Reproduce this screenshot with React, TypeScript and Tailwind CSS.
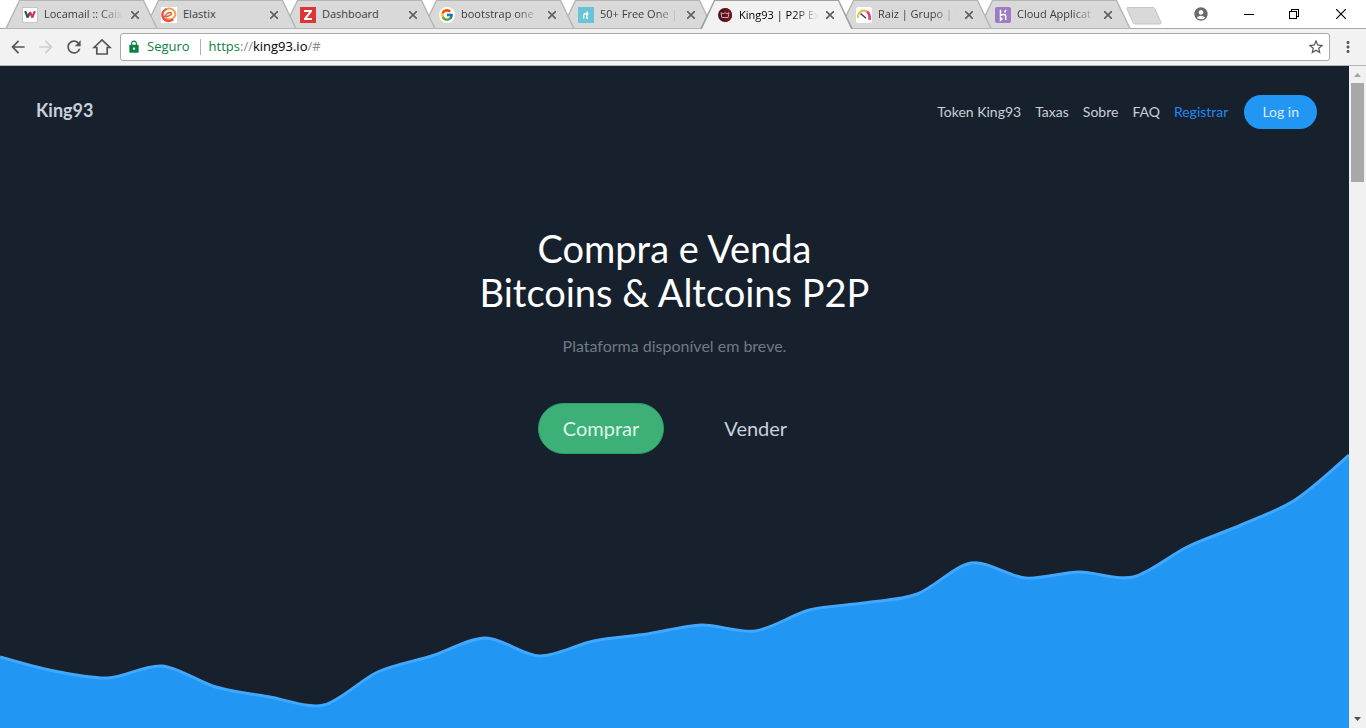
import React from "react";
import { FcGoogle } from "react-icons/fc";
import { MdAccountCircle, MdArrowBack, MdArrowForward, MdLock, MdMoreVert, MdRefresh, MdStarBorder } from "react-icons/md";

const chromeFont = "font-['Open_Sans','Noto_Sans',sans-serif]";
const siteFont = "font-[Lato,'Noto_Sans',sans-serif]";

/* ---------- favicons ---------- */

const LocamailIcon = () => (
  <svg viewBox="0 0 16 16" className="size-4" fill="none" strokeWidth="2.200">
    <rect x=".5" y=".5" width="15" height="15" fill="#fff" stroke="#c3c6ca" strokeWidth="1" />
    <path d="M2.500 5h1.200l1.800 5.500L8 5.500" stroke="#3d4a66" strokeLinejoin="bevel" />
    <path d="M8 5l2.400 5.500L12.300 5h1.200" stroke="#d8344f" strokeLinejoin="bevel" />
  </svg>
);

const ElastixIcon = () => (
  <svg viewBox="0 0 16 16" className="size-4" fill="none">
    <rect width="16" height="16" fill="#fff" />
    <path d="M5 2.300C8 .6 12 1.500 13.700 4.500c1.600 3 .2 6.400-3 7.500-2.400.8-4.800.2-6.200-1.200" stroke="#f0a24a" strokeWidth="2" />
    <path d="M5.500 2C2 3.600.7 7 2 10.200c1.600 3.900 6.500 5 10.300 2.200" stroke="#e8503f" strokeWidth="2.400" />
    <path d="M2.500 9.500c3 .3 7.600-.8 8.100-2.600.3-1.300-2.200-1.700-3.900-.8-1.300.7-2 1.600-2.200 2.800" stroke="#e8603f" strokeWidth="1.600" />
  </svg>
);

const ZabbixIcon = () => (
  <svg viewBox="0 0 16 16" className="size-4" fill="none" stroke="#fff" strokeWidth="2">
    <rect width="16" height="16" fill="#dc3535" stroke="none" />
    <path d="M4 4h8M4 12h8" />
    <path d="M11 4.200l-6 7.600" />
  </svg>
);

const GoogleIcon = () => (
  <span className="flex size-4 items-center justify-center rounded-full bg-white">
    <FcGoogle className="size-3.5" />
  </span>
);

const TemplateIcon = () => (
  <svg viewBox="0 0 16 16" className="size-4" fill="none" stroke="#fff" strokeWidth="1.400">
    <rect width="16" height="16" fill="#68c4d6" stroke="none" />
    <path d="M5.700 11.500V8.500c0-1.200.6-1.800 1.800-1.700M9.200 4.500l-.5 5.800c0 1 .5 1.300 1.400 1M7.400 6.800h3" />
  </svg>
);

const KingIcon = () => (
  <svg viewBox="0 0 16 16" className="size-4">
    <circle cx="8" cy="8" r="7" fill="#4e121f" />
    <path d="M8 1a7 7 0 0 1 0 14z" fill="#6b1520" />
    <path d="M4 5.500l2 1.500 2-1.500L10 7l2-1.500-.8 5H4.800z" fill="none" stroke="#d8a5a8" strokeWidth="1" />
  </svg>
);

const RaizIcon = () => (
  <svg viewBox="0 0 16 16" className="size-4" fill="none" strokeWidth="2">
    <rect width="16" height="16" rx="2" fill="#fff" />
    <path d="M2.300 11C1.600 8 3 5.500 5 4.300" stroke="#c9d436" />
    <path d="M4.600 4.500c2.200-1.300 5-1.200 6.900.4" stroke="#f6a83b" />
    <path d="M11 4.500c2 1.500 3 4 2.600 8.300" stroke="#ea3f80" strokeWidth="2.800" />
    <path d="M4.500 6.500l5.500 4.800" stroke="#33406b" strokeWidth="1.500" />
  </svg>
);

const HerokuIcon = () => (
  <svg viewBox="0 0 16 16" className="size-4" fill="none" stroke="#fff" strokeWidth="1.500">
    <rect width="16" height="16" rx="2" fill="#9e7cc1" stroke="none" />
    <path d="M5.500 2.800v5.700c2-1 5.200-1.600 5.200.6v4M10.700 2.800c0 1-.4 1.800-1.200 2.600M5.500 10.600v2.600l1.500-1.300z" />
  </svg>
);

/* ---------- window chrome ---------- */

type Tab = { title: string; icon: React.ReactNode; layer: string; active?: boolean; long?: boolean };

const tabs: Tab[] = [
  { title: "Locamail :: Caix", icon: <LocamailIcon />, layer: "z-[8]", long: true },
  { title: "Elastix", icon: <ElastixIcon />, layer: "z-[7]" },
  { title: "Dashboard", icon: <ZabbixIcon />, layer: "z-[6]" },
  { title: "bootstrap one", icon: <GoogleIcon />, layer: "z-[5]", long: true },
  { title: "50+ Free One |", icon: <TemplateIcon />, layer: "z-[4]", long: true },
  { title: "King93 | P2P Ex", icon: <KingIcon />, layer: "z-[9]", active: true, long: true },
  { title: "Raiz | Grupo | P", icon: <RaizIcon />, layer: "z-[3]", long: true },
  { title: "Cloud Applicat", icon: <HerokuIcon />, layer: "z-[2]", long: true },
];

const CloseGlyph = () => (
  <svg viewBox="0 0 8 8" className="size-2" stroke="#5f5f5f" strokeWidth="1.600">
    <path d="M0 0l8 8M8 0L0 8" />
  </svg>
);

function BrowserTab({ tab }: { tab: Tab }) {
  return (
    <div
      className={`-mr-3.5 h-[29px] w-[153px] shrink-0 pt-px [clip-path:polygon(14px_0,139px_0,100%_100%,0_100%)] ${tab.layer} ${
        tab.active ? "bg-[#a0a0a0]" : "bg-[#b4b4b4] pb-px"
      }`}
    >
      <div
        className={`flex h-full items-center pr-[19px] pl-[17px] [clip-path:polygon(15px_0,138px_0,calc(100%-2px)_100%,2px_100%)] ${
          tab.active ? "bg-[#f2f2f2]" : "bg-[#d9d9d9]"
        }`}
      >
        {tab.icon}
        <span
          className={`ml-1.5 min-w-0 flex-1 text-[11px] whitespace-nowrap ${
            tab.long ? "[mask-image:linear-gradient(to_right,#000_70%,transparent)]" : ""
          } ${tab.active ? "text-black" : "text-[#3c3c3c]"}`}
        >
          {tab.title}
        </span>
        <button aria-label={`Fechar ${tab.title}`} className="ml-2">
          <CloseGlyph />
        </button>
      </div>
    </div>
  );
}

function TabStrip() {
  return (
    <div className="flex h-[29px] items-start border-b border-[#a9a9a9] bg-white pl-[5px]">
      <div className="isolate -mb-px flex">
        {tabs.map((tab) => (
          <BrowserTab key={tab.title} tab={tab} />
        ))}
      </div>
      <button aria-label="Nova guia" className="mt-[7px] ml-[9px]">
        <svg viewBox="0 0 36 18" className="h-[18px] w-9">
          <path d="M2 .5h25q1.500 0 2 1.500l6 13.500q.5 1.500-1.500 1.500H9q-1.500 0-2-1.500L1 2Q.5.5 2 .5z" fill="#d9d9d9" stroke="#c4c4c4" />
        </svg>
      </button>
      <div className="ml-auto flex h-[27px] items-center">
        <button aria-label="Perfil" className="flex w-[50px] justify-center">
          <MdAccountCircle className="size-4 text-[#6b6b6b]" />
        </button>
        <button aria-label="Minimizar" className="flex w-[46px] justify-center">
          <svg viewBox="0 0 10 10" className="size-2.5" shapeRendering="crispEdges">
            <path d="M0 5.500h10" stroke="#000" />
          </svg>
        </button>
        <button aria-label="Restaurar" className="flex w-11 justify-center">
          <svg viewBox="0 0 10 10" className="size-2.5" fill="none" stroke="#000" shapeRendering="crispEdges">
            <path d="M.5 2.500h7v7h-7zM2.500 2.500v-2h7v7h-2" />
          </svg>
        </button>
        <button aria-label="Fechar" className="flex w-[50px] justify-center">
          <svg viewBox="0 0 10 10" className="size-2.5" stroke="#000" strokeWidth="1.200">
            <path d="M0 0l10 10M10 0L0 10" />
          </svg>
        </button>
      </div>
    </div>
  );
}

function Toolbar() {
  return (
    <div className="flex h-[37px] items-center border-b border-[#b6b4b6] bg-[#f2f2f2] pl-2">
      <div className="flex items-center gap-2 text-[#555]">
        <button aria-label="Voltar">
          <MdArrowBack className="size-5" />
        </button>
        <button aria-label="Avançar" className="text-[#cfcfcf]">
          <MdArrowForward className="size-5" />
        </button>
        <button aria-label="Recarregar">
          <MdRefresh className="size-5" />
        </button>
        <button aria-label="Página inicial">
          <svg viewBox="0 0 20 20" className="size-5" fill="none" stroke="#555" strokeWidth="1.700">
            <path d="M2 10.500L10 3l8 7.500h-2.800V17H4.800v-6.500z" />
          </svg>
        </button>
      </div>
      <div className="ml-2 flex h-7 flex-1 items-center rounded-[3px] border border-[#a9a9a9] bg-white pr-1 pl-1.5 text-[13px]">
        <MdLock className="size-3.5 text-[#0b8043]" />
        <span className="ml-1.5 text-[#0b8043]">Seguro</span>
        <span className="mr-2 ml-2.5 h-4 w-px bg-[#b0b0b0]" />
        <a href="#" className="flex-1 text-[#8a8a8a]">
          <span className="text-[#0b8043]">https</span>://<span className="text-black">king93.io</span>/#
        </a>
        <button aria-label="Favoritar">
          <MdStarBorder className="size-[18px] text-[#555]" />
        </button>
      </div>
      <button aria-label="Menu" className="flex w-9 justify-center">
        <MdMoreVert className="size-[18px] text-[#555]" />
      </button>
    </div>
  );
}

function ScrollBar() {
  return (
    <div className="flex w-[17px] shrink-0 flex-col items-center bg-[#f1f1f1]">
      <svg viewBox="0 0 17 17" className="size-[17px]">
        <path d="M5 11l3.500-4 3.500 4z" fill="#a3a3a3" />
      </svg>
      <div className="h-[99px] w-[13px] bg-[#a8a8a8]" />
      <svg viewBox="0 0 17 17" className="mt-auto size-[17px]">
        <path d="M5 6l3.500 4L12 6z" fill="#505050" />
      </svg>
    </div>
  );
}

/* ---------- price chart ---------- */

const CHART_W = 1349;
const CHART_H = 274;
const TENSION = 0.3;
const values = [203, 217, 224, 212, 233, 243, 251, 218, 202, 184, 202, 187, 180, 171, 177, 156, 149, 140, 109, 124, 118, 123, 93, 71, 46, 1];

/* Smooth line through every point; each handle follows the slope between its neighbours. */
function splinePath(data: number[]) {
  const step = CHART_W / (data.length - 1);
  const last = data.length - 1;
  const handleX = (i: number) => (i === 0 || i === last ? 0 : step * TENSION);
  const handleY = (i: number) => (i === 0 || i === last ? 0 : ((data[i + 1] - data[i - 1]) / 2) * TENSION);
  return data
    .map((y, i) => {
      const x = i * step;
      if (i === 0) return `M${x} ${y}`;
      return `C${x - step + handleX(i - 1)} ${data[i - 1] + handleY(i - 1)} ${x - handleX(i)} ${y - handleY(i)} ${x} ${y}`;
    })
    .join("");
}

function PriceChart() {
  const line = splinePath(values);
  return (
    <svg viewBox={`0 0 ${CHART_W} ${CHART_H}`} preserveAspectRatio="none" className="mt-auto block h-[274px] w-full" aria-hidden="true">
      <path d={`${line}V${CHART_H}H0z`} fill="#2196f3" />
      <path d={line} fill="none" stroke="#41a8ff" strokeWidth="3" />
    </svg>
  );
}

/* ---------- page ---------- */

const links = ["Token King93", "Taxas", "Sobre", "FAQ"];

function Site() {
  return (
    <main className={`flex min-w-0 flex-1 flex-col bg-[#17202d] text-[#c8d0da] ${siteFont}`}>
      <header className="flex items-start justify-between pt-[29px] pr-8 pl-9">
        <a href="#" className="text-lg leading-[30px] font-bold">
          King93
        </a>
        <nav className="flex items-center gap-4 text-sm">
          <div className="flex gap-3.5">
            {links.map((label) => (
              <a key={label} href="#">
                {label}
              </a>
            ))}
            <a href="#" className="text-[#2188f3]">
              Registrar
            </a>
          </div>
          <button className="h-[34px] rounded-full bg-[#2196f3] px-[18px] text-[#dcecfb]">Log in</button>
        </nav>
      </header>
      <section className="flex flex-col items-center pt-[97px] text-center">
        <h1 className="text-[38px] leading-[44px] text-white">
          Compra e Venda
          <br />
          Bitcoins &amp; Altcoins P2P
        </h1>
        <p className="mt-5 text-base leading-6 text-[#707987]">Plataforma disponível em breve.</p>
        <div className="mt-[45px] flex gap-9 text-xl">
          <button className="h-[51px] rounded-full border border-[#27a567] bg-[#3cb077] px-6 pb-0.5 text-[#dff5ea]">Comprar</button>
          <button className="h-[51px] px-6 pb-0.5">Vender</button>
        </div>
      </section>
      <PriceChart />
    </main>
  );
}

export default function App() {
  return (
    <div className={`flex min-h-screen flex-col ${chromeFont}`}>
      <TabStrip />
      <Toolbar />
      <div className="flex flex-1">
        <Site />
        <ScrollBar />
      </div>
    </div>
  );
}
